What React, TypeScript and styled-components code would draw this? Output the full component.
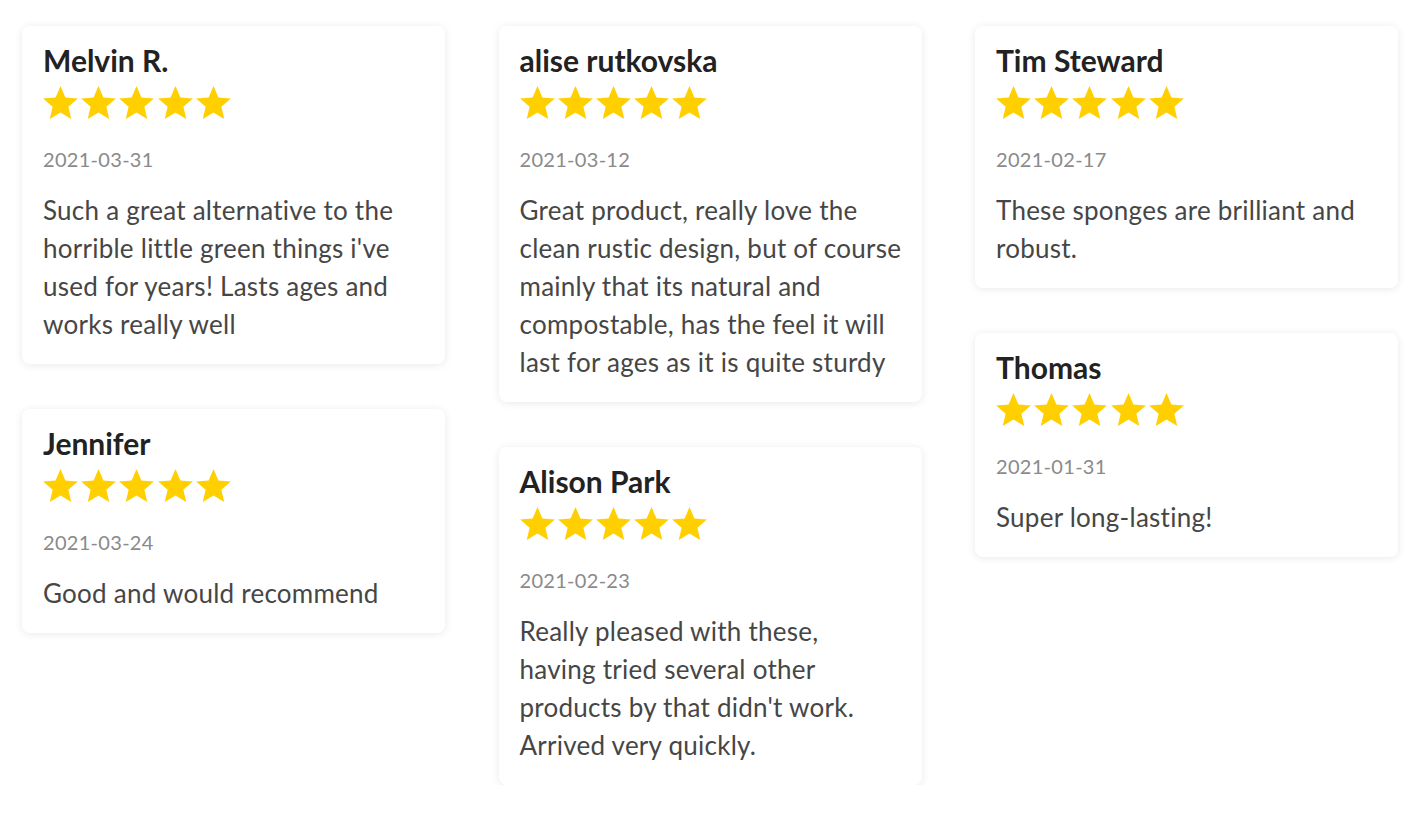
import React from 'react';
import styled, { createGlobalStyle } from 'styled-components';

interface Review {
    id: number;
    name: string;
    date: string;
    rating: number;
    text: string;
}

// line breaks follow the layout of the original widget
const columns: Review[][] = [
    [
        {
            id: 1,
            name: 'Melvin R.',
            date: '2021-03-31',
            rating: 5,
            text: "Such a great alternative to the\nhorrible little green things i've\nused for years! Lasts ages and\nworks really well",
        },
        { id: 2, name: 'Jennifer', date: '2021-03-24', rating: 5, text: 'Good and would recommend' },
    ],
    [
        {
            id: 3,
            name: 'alise rutkovska',
            date: '2021-03-12',
            rating: 5,
            text: 'Great product, really love the\nclean rustic design, but of course\nmainly that its natural and\ncompostable, has the feel it will\nlast for ages as it is quite sturdy',
        },
        {
            id: 4,
            name: 'Alison Park',
            date: '2021-02-23',
            rating: 5,
            text: "Really pleased with these,\nhaving tried several other\nproducts by that didn't work.\nArrived very quickly.",
        },
    ],
    [
        {
            id: 5,
            name: 'Tim Steward',
            date: '2021-02-17',
            rating: 5,
            text: 'These sponges are brilliant and\nrobust.',
        },
        { id: 6, name: 'Thomas', date: '2021-01-31', rating: 5, text: 'Super long-lasting!' },
    ],
];

const GlobalStyle = createGlobalStyle`
    body {
        margin: 0;
        background: #ffffff;
        font-family: Lato, "Noto Sans", sans-serif;
    }
`;

const Page = styled.div`
    display: grid;
    grid-template-columns: repeat(3, 423px);
    column-gap: 53.5px;
    align-items: start;
    padding: 26px 0 0 22px;
`;

const Column = styled.div`
    display: flex;
    flex-direction: column;
    gap: 45px;
`;

const Card = styled.div`
    background: #ffffff;
    border-radius: 8px;
    box-shadow: 0 1px 8px rgba(0, 0, 0, 0.09);
    padding: 16px 16px 21px 21px;
`;

const Name = styled.div`
    font-size: 30px;
    line-height: 36px;
    font-weight: 700;
    color: #222222;
`;

const Stars = styled.div`
    display: flex;
    gap: 3.2px;
    margin-top: 8px;
    height: 33px;
`;

const Star = styled.svg`
    width: 35px;
    height: 33px;
    fill: #ffcf00;
`;

const DateText = styled.div`
    margin-top: 28px;
    font-size: 20px;
    line-height: 24px;
    color: #8a8a8a;
    letter-spacing: 0.3px;
`;

const Body = styled.p`
    margin: 20px 0 0;
    font-size: 26px;
    line-height: 38px;
    color: #464646;
    letter-spacing: 0.25px;
    white-space: pre-line;
`;

const StarIcon: React.FC = () => (
    <Star viewBox="2 2 20 19">
        <path d="M12 17.27L18.18 21l-1.64-7.03L22 9.24l-7.19-.61L12 2 9.19 8.63 2 9.24l5.46 4.73L5.82 21z" />
    </Star>
);

const ReviewCard: React.FC<{ review: Review }> = ({ review }) => (
    <Card>
        <Name>{review.name}</Name>
        <Stars>
            {Array.from({ length: review.rating }).map((_, i) => (
                <StarIcon key={i} />
            ))}
        </Stars>
        <DateText>{review.date}</DateText>
        <Body>{review.text}</Body>
    </Card>
);

const App: React.FC = () => (
    <>
        <GlobalStyle />
        <Page>
            {columns.map((col, i) => (
                <Column key={i}>
                    {col.map((review) => (
                        <ReviewCard key={review.id} review={review} />
                    ))}
                </Column>
            ))}
        </Page>
    </>
);

export default App;
